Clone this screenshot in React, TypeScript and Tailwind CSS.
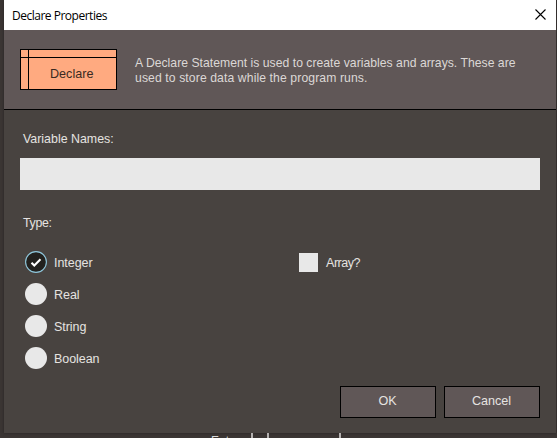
import React from "react";

type Choice = { label: string; checked: boolean };

const types: Choice[] = [
  { label: "Integer", checked: true },
  { label: "Real", checked: false },
  { label: "String", checked: false },
  { label: "Boolean", checked: false },
];

function Radio({ label, checked }: Choice) {
  return (
    <label className="flex h-8 items-center gap-[7px]">
      {checked ? (
        <svg className="size-[22px]" viewBox="0 0 22 22" fill="none">
          <circle cx="11" cy="11" r="10.4" fill="#22211e" stroke="#8fc7dc" strokeWidth="1.1" />
          <path d="M6.5 11.7 9.3 14.5 15.5 8.3" stroke="#fff" strokeWidth="2.1" />
        </svg>
      ) : (
        <span className="size-[22px] rounded-full bg-[#e8e8e8]" />
      )}
      <span className="pt-0.5 tracking-[-0.05px]">{label}</span>
    </label>
  );
}

function Button({ children }: { children: React.ReactNode }) {
  return (
    <button className="h-8 w-24 border border-black bg-[#605757] pr-px pb-px text-center text-[12.6px]">
      {children}
    </button>
  );
}

export default function App() {
  return (
    <div className="h-[438px] w-[557px] overflow-hidden bg-[#3b3634] pl-1 font-['Liberation_Sans',Arial,sans-serif] text-[12.5px] leading-[15px] text-[#e6e3e1]">
      <div className="flex h-[433px] w-[552px] flex-col bg-[#484340] shadow-[0_0_3px_#282423]">
        <div className="flex h-[30px] shrink-0 items-center justify-between bg-white pr-[10px] pl-2 text-black">
          <span className="font-['Open_Sans','Noto_Sans',sans-serif] text-[12px] tracking-[-0.49px]">
            Declare Properties
          </span>
          <svg className="mb-0.5 size-[11px]" viewBox="0 0 11 11" fill="none" stroke="#000" strokeWidth="1.1">
            <path d="M.5.5l10 10M10.5.5l-10 10" />
          </svg>
        </div>
        <div className="flex h-20 shrink-0 items-start border-b border-black bg-[#605757] pt-[19px] pl-4">
          <div className="grid h-[41px] w-[97px] grid-cols-[8px_1fr] grid-rows-[8px_1fr] border border-black bg-[#ffaa80] text-[#3a2a22]">
            <div className="border-r border-b border-black" />
            <div className="border-b border-black" />
            <div className="border-r border-black" />
            <div className="flex items-center pt-px pl-[21px] text-[12.6px]">Declare</div>
          </div>
          <p className="mt-[7px] ml-[18px] text-[12.2px] whitespace-nowrap text-[#dcd8d6]">
            <span className="tracking-[0.02px]">
              A Declare Statement is used to create variables and arrays. These are
            </span>
            <br />
            <span className="tracking-[0.1px]">used to store data while the program runs.</span>
          </p>
        </div>
        <div className="flex flex-col px-4 pt-[22px]">
          <label className="pl-[3px] text-[12.4px]">Variable Names:</label>
          <input className="mt-[11px] h-8 w-[520px] bg-[#e8e8e8] px-2 text-black outline-none" />
          <span className="mt-[26px] pl-[3px] text-[12.3px] tracking-[-0.3px]">Type:</span>
          <div className="mt-[15px] flex">
            <div className="flex w-[274px] flex-col pl-[5px]">
              {types.map((t) => (
                <Radio key={t.label} {...t} />
              ))}
            </div>
            <label className="ml-[5px] flex h-8 items-center gap-2">
              <span className="size-[19px] bg-[#e8e8e8]" />
              <span className="pt-0.5 tracking-[-0.45px]">Array?</span>
            </label>
          </div>
          <div className="mt-3 flex justify-end gap-2">
            <Button>OK</Button>
            <Button>Cancel</Button>
          </div>
        </div>
      </div>
      <div className="relative h-[5px] overflow-hidden">
        <span className="absolute top-[2px] left-[207px] text-[12px] leading-[12px] text-[#d8d8d8]">Enter</span>
        <span className="absolute left-[247px] h-full w-0.5 bg-[#b5b2b1]" />
        <span className="absolute left-[263px] h-full w-0.5 bg-[#b5b2b1]" />
        <span className="absolute left-[335px] h-full w-0.5 bg-[#b5b2b1]" />
      </div>
    </div>
  );
}
